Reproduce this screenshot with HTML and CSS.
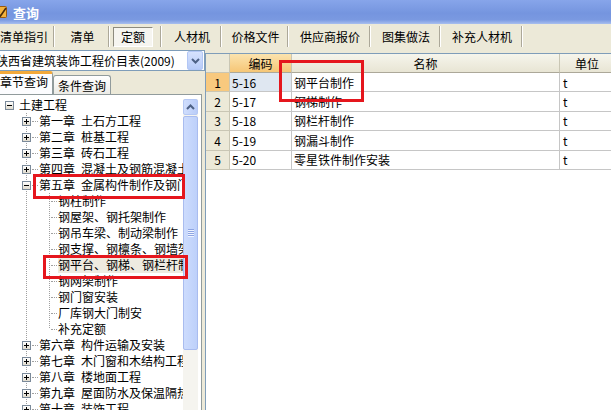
FILE: index.html
```html
<!DOCTYPE html>
<html lang="zh-CN">
  <head>
    <meta charset="UTF-8" />
    <meta name="viewport" content="width=device-width, initial-scale=1.0" />
    <title>查询</title>
    <link rel="stylesheet" href="styles.css">
  </head>
  <body>
    <div class="window">
      <header class="titlebar">
        <svg class="app-icon" width="14" height="14" viewBox="0 0 14 14">
          <rect x="1.5" y="1.5" width="11" height="11" rx="1" fill="#f3b23e" stroke="#9a5a10" />
          <path d="M3.5 8 L6.5 11 L12 3" stroke="#4a2a08" stroke-width="1.6" fill="none" />
        </svg>
        <span>查询</span>
      </header>

      <nav class="toolbar">
        <div class="tool t1">清单指引</div>
        <div class="tool t2">清单</div>
        <div class="tool t3"><span class="pressed">定额</span></div>
        <div class="tool t4">人材机</div>
        <div class="tool t5">价格文件</div>
        <div class="tool t6">供应商报价</div>
        <div class="tool t7">图集做法</div>
        <div class="tool t8">补充人材机</div>
      </nav>

      <div class="main">
        <aside class="left">
          <div class="combo">
            <span class="combo-text">陕西省建筑装饰工程价目表(2009)</span>
            <span class="combo-btn">
              <svg width="9" height="6" viewBox="0 0 9 6"><path d="M1 1 L4.5 4.5 L8 1" stroke="#4d6185" stroke-width="2" fill="none" /></svg>
            </span>
          </div>

          <div class="tabs">
            <div class="tab active">章节查询</div>
            <div class="tab">条件查询</div>
          </div>

          <div class="tree-panel">
            <div class="tree">
              <div class="node root"><span class="exp"></span><span class="label">土建工程</span></div>
              <div class="node ch"><span class="exp plus"></span><span class="dash"></span><span class="label"><b class="no">第一章</b>土石方工程</span></div>
              <div class="node ch"><span class="exp plus"></span><span class="dash"></span><span class="label"><b class="no">第二章</b>桩基工程</span></div>
              <div class="node ch"><span class="exp plus"></span><span class="dash"></span><span class="label"><b class="no">第三章</b>砖石工程</span></div>
              <div class="node ch"><span class="exp plus"></span><span class="dash"></span><span class="label"><b class="no">第四章</b>混凝土及钢筋混凝土工程</span></div>
              <div class="node ch"><span class="exp"></span><span class="dash"></span><span class="label"><b class="no">第五章</b>金属构件制作及钢门窗</span></div>
              <div class="node leaf"><span class="dash"></span><span class="label">钢柱制作</span></div>
              <div class="node leaf"><span class="dash"></span><span class="label">钢屋架、钢托架制作</span></div>
              <div class="node leaf"><span class="dash"></span><span class="label">钢吊车梁、制动梁制作</span></div>
              <div class="node leaf"><span class="dash"></span><span class="label">钢支撑、钢檩条、钢墙架制作</span></div>
              <div class="node leaf"><span class="dash"></span><span class="label sel">钢平台、钢梯、钢栏杆制作</span></div>
              <div class="node leaf"><span class="dash"></span><span class="label">钢网架制作</span></div>
              <div class="node leaf"><span class="dash"></span><span class="label">钢门窗安装</span></div>
              <div class="node leaf"><span class="dash"></span><span class="label">厂库钢大门制安</span></div>
              <div class="node leaf last"><span class="dash"></span><span class="label">补充定额</span></div>
              <div class="node ch"><span class="exp plus"></span><span class="dash"></span><span class="label"><b class="no">第六章</b>构件运输及安装</span></div>
              <div class="node ch"><span class="exp plus"></span><span class="dash"></span><span class="label"><b class="no">第七章</b>木门窗和木结构工程</span></div>
              <div class="node ch"><span class="exp plus"></span><span class="dash"></span><span class="label"><b class="no">第八章</b>楼地面工程</span></div>
              <div class="node ch"><span class="exp plus"></span><span class="dash"></span><span class="label"><b class="no">第九章</b>屋面防水及保温隔热工程</span></div>
              <div class="node ch"><span class="exp plus"></span><span class="dash"></span><span class="label"><b class="no">第十章</b>装饰工程</span></div>
            </div>

            <div class="vscroll">
              <div class="sb-up">
                <svg width="9" height="6" viewBox="0 0 9 6"><path d="M1 5 L4.5 1.5 L8 5" stroke="#4d6185" stroke-width="2" fill="none" /></svg>
              </div>
              <div class="sb-thumb"><span class="grip"></span></div>
            </div>
          </div>
        </aside>

        <div class="splitter"></div>

        <section class="grid-panel">
          <div class="grid">
            <div class="grid-row head">
              <div class="cell rn"></div>
              <div class="cell hl">编码</div>
              <div class="cell">名称</div>
              <div class="cell">单位</div>
            </div>
            <div class="grid-row current">
              <div class="cell rn">1</div>
              <div class="cell code">5-16</div>
              <div class="cell">钢平台制作</div>
              <div class="cell unit">t</div>
            </div>
            <div class="grid-row">
              <div class="cell rn">2</div>
              <div class="cell code">5-17</div>
              <div class="cell">钢梯制作</div>
              <div class="cell unit">t</div>
            </div>
            <div class="grid-row">
              <div class="cell rn">3</div>
              <div class="cell code">5-18</div>
              <div class="cell">钢栏杆制作</div>
              <div class="cell unit">t</div>
            </div>
            <div class="grid-row">
              <div class="cell rn">4</div>
              <div class="cell code">5-19</div>
              <div class="cell">钢漏斗制作</div>
              <div class="cell unit">t</div>
            </div>
            <div class="grid-row">
              <div class="cell rn">5</div>
              <div class="cell code">5-20</div>
              <div class="cell">零星铁件制作安装</div>
              <div class="cell unit">t</div>
            </div>
          </div>
        </section>
      </div>

      <!-- red annotation frames -->
      <div class="mark mark-chapter"></div>
      <div class="mark mark-item"></div>
      <div class="mark mark-name"></div>
    </div>
  </body>
</html>
```

FILE: styles.css
```css
* {
  margin: 0;
  padding: 0;
  box-sizing: border-box;
}
body {
  width: 611px;
  height: 410px;
  overflow: hidden;
  background: #ece9d8;
  color: #000;
  font-family: "Noto Sans CJK SC", "Liberation Sans", sans-serif;
  font-size: 12px;
}
.window {
  position: relative;
  width: 611px;
  height: 410px;
  overflow: hidden;
}
.titlebar {
  height: 24px;
  display: flex;
  align-items: center;
  color: #fff;
  font-size: 13px;
  font-weight: bold;
  background: linear-gradient(#87a5ea, #7595df 55%, #7a99e1 82%, #a8bfef);
}
.app-icon {
  margin-left: -6px;
  margin-right: 5px;
}
.toolbar {
  height: 25px;
  display: flex;
  margin-left: -7px;
}
.tool {
  display: flex;
  align-items: center;
  justify-content: center;
  white-space: nowrap;
  margin: 2px 0;
  box-shadow: inset -1px 0 0 #fff, inset -2px 0 0 #aca899;
}
.t1 {width: 62px;}
.t2 {width: 55px;}
.t3 {width: 52px; justify-content: flex-start;}
.t4 {width: 60px;}
.t5 {width: 67px;}
.t6 {width: 82px;}
.t7 {width: 70px;}
.t8 {width: 82px;}
.pressed {
  width: 40px;
  height: 20px;
  margin-left: 3px;
  display: flex;
  align-items: center;
  justify-content: center;
  background: #f6f5f0;
  border: 1px solid;
  border-color: #8d8b7e #fff #fff #8d8b7e;
}
.main {
  height: 361px;
  display: flex;
}
.left {
  width: 205px;
  display: flex;
  flex-direction: column;
  padding-top: 1px;
}
.combo {
  height: 23px;
  display: flex;
  align-items: center;
  background: #fff;
  border: 1px solid #7f9db9;
  border-left: none;
  padding-right: 1px;
}
.combo-text {
  flex: 1;
  margin-left: -4px;
  white-space: nowrap;
  overflow: hidden;
}
.combo-btn {
  width: 16px;
  height: 19px;
  display: flex;
  align-items: center;
  justify-content: center;
  border: 1px solid #b3c7f5;
  border-radius: 2px;
  background: linear-gradient(#d6e2fd, #b7cbf8);
}
.tabs {
  height: 23px;
  display: flex;
  align-items: flex-end;
}
.tab {
  height: 19px;
  padding: 0 4px;
  display: flex;
  align-items: center;
  white-space: nowrap;
  border: 1px solid #919b9c;
  border-bottom: none;
  border-radius: 3px 3px 0 0;
  background: linear-gradient(#fff, #ecebe6);
}
.tab.active {
  width: 58px;
  height: 23px;
  margin-left: -5px;
  justify-content: center;
  align-items: flex-start;
  line-height: 15px;
  border-top: 3px solid #f2a93b;
  background: #fcfcfe;
}
.tree-panel {
  flex: 1;
  margin-right: 3px;
  display: flex;
  background: #fff;
  border: 1px solid #919b9c;
  border-left: none;
  border-bottom: none;
}
.tree {
  flex: 1;
  overflow: hidden;
  padding-top: 2px;
}
.node {
  height: 16px;
  display: flex;
  align-items: center;
  white-space: nowrap;
  background-repeat: no-repeat;
}
.node.root {
  padding-left: 5px;
}
.node.root .label {
  margin-left: 5px;
}
.node.ch {
  padding-left: 22px;
  background-image: repeating-linear-gradient(#a0a0a0 0 1px, transparent 1px 2px);
  background-size: 1px 100%;
  background-position: 26px 0;
}
.node.leaf {
  padding-left: 50px;
  background-image: repeating-linear-gradient(#a0a0a0 0 1px, transparent 1px 2px), repeating-linear-gradient(#a0a0a0 0 1px, transparent 1px 2px);
  background-size: 1px 100%, 1px 100%;
  background-position: 26px 0, 49px 0;
}
.node.leaf.last {
  background-size: 1px 100%, 1px 8px;
}
.exp {
  width: 9px;
  height: 9px;
  flex: none;
  border: 1px solid #7b8a9a;
  background: linear-gradient(#000, #000) center / 5px 1px no-repeat, linear-gradient(#fff, #e0dbcd);
}
.exp.plus {
  background: linear-gradient(#000, #000) center / 5px 1px no-repeat, linear-gradient(#000, #000) center / 1px 5px no-repeat, linear-gradient(#fff, #e0dbcd);
}
.dash {
  width: 6px;
  flex: none;
  margin-left: 1px;
  border-top: 1px dotted #a0a0a0;
}
.label {
  line-height: 16px;
  margin-left: 1px;
}
.label .no {
  font-weight: normal;
  margin-right: 6px;
}
.sel {
  background: #eeebe0;
}
.vscroll {
  width: 15px;
  flex: none;
  margin: 4px 3px 0 0;
  display: flex;
  flex-direction: column;
  background: #f5f4ef;
}
.sb-up {
  height: 16px;
  display: flex;
  align-items: center;
  justify-content: center;
  border: 1px solid #b5c8f4;
  border-radius: 2px;
  background: linear-gradient(90deg, #d0defd, #b9ccf8);
}
.sb-thumb {
  height: 234px;
  margin-top: 1px;
  display: flex;
  align-items: center;
  justify-content: center;
  border: 1px solid #a9bcef;
  border-radius: 2px;
  background: linear-gradient(90deg, #cddcfd, #bdd0fa);
}
.grip {
  width: 6px;
  height: 8px;
  background: repeating-linear-gradient(#8ea5e3 0 1px, #eef3ff 1px 2px);
}
.splitter {
  width: 3px;
}
.grid-panel {
  flex: 1;
  padding-top: 4px;
}
.grid {
  height: 100%;
  overflow: hidden;
  background: #fff;
  border-top: 1px solid #7f9db9;
  border-left: 1px solid #7f9db9;
}
.grid-row {
  height: 19.4px;
  display: grid;
  grid-template-columns: 24px 62px 268px 55px;
}
.grid-row.head {
  height: 19px;
}
.cell {
  display: flex;
  align-items: center;
  padding-left: 2px;
  white-space: nowrap;
  overflow: hidden;
  border-right: 1px solid #c6c6c6;
  border-bottom: 1px solid #c6c6c6;
}
.head .cell {
  justify-content: center;
  padding-left: 0;
  border-right-color: #c9c6b4;
  border-bottom-color: #aca899;
  background: linear-gradient(#f6f5ec, #e8e5d4);
}
.head .cell.hl {
  background: linear-gradient(#fbe3ae, #f6c676);
}
.cell.rn {
  justify-content: center;
  padding-left: 0;
  border-right-color: #c9c6b4;
  border-bottom-color: #c9c6b4;
  background: #ece9d8;
}
.current .cell.rn {
  background: #f8c97e;
}
.current .cell.code {
  background: #dfe7f1;
}
.cell.unit {
  padding-left: 3px;
}
.mark {
  position: absolute;
  border: 3px solid #e5161d;
}
.mark-chapter {
  left: 33px;
  top: 174px;
  width: 152px;
  height: 25px;
}
.mark-item {
  left: 43px;
  top: 255px;
  width: 145px;
  height: 24px;
}
.mark-name {
  left: 279px;
  top: 60px;
  width: 85px;
  height: 42px;
}
```
